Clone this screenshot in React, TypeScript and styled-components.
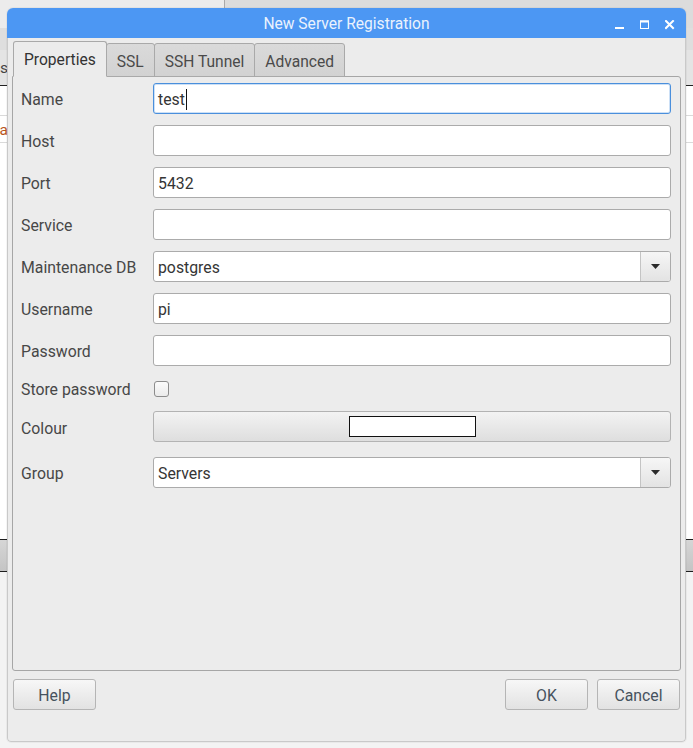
import React from "react";
import styled, { createGlobalStyle } from "styled-components";

const Global = createGlobalStyle`
  html, body { margin: 0; padding: 0; }
  body {
    width: 693px;
    height: 748px;
    overflow: hidden;
    font-family: Roboto, "Noto Sans", "Liberation Sans", sans-serif;
    -webkit-font-smoothing: antialiased;
  }
  * { box-sizing: border-box; }
`;

const Desktop = styled.div`
  position: relative;
  width: 693px;
  height: 748px;
  overflow: hidden;
  background: #ffffff;
`;

/* ---------- background application window ---------- */
const BgApp = styled.div`
  display: flex;
  flex-direction: column;
  width: 100%;
  height: 100%;
`;
const BgTop = styled.div`
  display: flex;
  height: 28px;
`;
const BgTopLeft = styled.div`
  width: 225px;
  background: #ececec;
  border-right: 1px solid #a9a9a9;
`;
const BgTopRight = styled.div`
  flex: 1;
  background: #dcdcdc;
`;
const BgToolbar = styled.div`
  height: 22px;
  background: #dedede;
`;
const BgTabs = styled.div`
  height: 36px;
  background: #e4e4e4;
  border-bottom: 1px solid #222;
  display: flex;
  align-items: center;
`;
const BgClip = styled.div<{ $color?: string }>`
  width: 8px;
  overflow: hidden;
  display: flex;
  justify-content: flex-end;
  white-space: nowrap;
  font-size: 15.5px;
  padding-top: 1px;
  color: ${(p) => p.$color || "#444"};
`;
const BgPanel = styled.div`
  height: 453px;
  background: #ffffff;
  display: flex;
  flex-direction: column;
  padding-top: 29px;
`;
const BgRow = styled.div`
  height: 28px;
  border-top: 1px solid #dadada;
  border-bottom: 1px solid #dadada;
  display: flex;
  align-items: center;
`;
const BgStatus = styled.div`
  height: 33px;
  border-top: 1px solid #1e1e1e;
  border-bottom: 1px solid #1e1e1e;
  background: linear-gradient(#d6d6d6, #c4c4c4);
`;
const BgRest = styled.div`
  flex: 1;
  background: #f3f3f3;
`;

/* ---------- dialog window ---------- */
const Dialog = styled.div`
  position: absolute;
  left: 7px;
  top: 8px;
  width: 679px;
  height: 734px;
  display: flex;
  flex-direction: column;
  border-radius: 6px 6px 4px 4px;
  overflow: hidden;
  box-shadow: 0 0 0 1px rgba(0, 0, 0, 0.04);
`;
const TitleBar = styled.div`
  height: 30px;
  background: #4c97f3;
  display: grid;
  grid-template-columns: 1fr auto 1fr;
  align-items: center;
  color: #eaf2fd;
  font-size: 15.6px;
`;
const TitleText = styled.div`
  grid-column: 2;
  padding-top: 1px;
`;
const Controls = styled.div`
  grid-column: 3;
  justify-self: end;
  display: flex;
  align-items: center;
  gap: 15px;
  padding-right: 11px;
  padding-top: 3px;
`;
const Body = styled.div`
  flex: 1;
  background: #ececec;
  border: 1px solid #c9c9c9;
  border-top: none;
  border-radius: 0 0 4px 4px;
  padding: 3px 4px 0 4px;
  display: flex;
  flex-direction: column;
`;
const TabStrip = styled.div`
  display: flex;
  align-items: flex-end;
  height: 36px;
  padding-left: 1px;
  margin-bottom: -1px;
`;
const Tab = styled.div<{ $active?: boolean }>`
  position: relative;
  z-index: ${(p) => (p.$active ? 2 : 1)};
  height: ${(p) => (p.$active ? 36 : 34)}px;
  padding: 0 10px;
  margin-right: -1px;
  display: flex;
  align-items: center;
  justify-content: center;
  font-size: 15.6px;
  color: ${(p) => (p.$active ? "#333" : "#4a4a4a")};
  border: 1px solid #a9a9a9;
  border-bottom-color: ${(p) => (p.$active ? "#ececec" : "#a9a9a9")};
  border-radius: 3px 3px 0 0;
  background: ${(p) =>
    p.$active ? "#ececec" : "linear-gradient(#dadada, #d2d2d2)"};
  padding-top: ${(p) => (p.$active ? 2 : 3)}px;
`;
const Panel = styled.div`
  height: 595px;
  border: 1px solid #a6a6a6;
  border-radius: 0 3px 3px 3px;
  background: #ececec;
  padding: 6px 9px 0 8px;
`;
const Form = styled.div`
  display: grid;
  grid-template-columns: 132px 1fr;
  grid-template-rows: repeat(7, 31px) 23px 35px 31px;
  row-gap: 11px;
  align-items: center;
`;
const Label = styled.div`
  font-size: 15.8px;
  color: #474747;
  white-space: nowrap;
  padding-top: 2px;
`;
const Input = styled.div<{ $focus?: boolean }>`
  height: 31px;
  background: #ffffff;
  border: 1px solid ${(p) => (p.$focus ? "#4a8fdc" : "#ababab")};
  border-radius: 3px;
  box-shadow: ${(p) =>
    p.$focus ? "inset 0 0 0 1px rgba(110,165,230,0.35)" : "none"};
  display: flex;
  align-items: center;
  padding: 1px 0 0 4px;
  font-size: 15.8px;
  color: #353535;
`;
const Caret = styled.span`
  display: inline-block;
  width: 1px;
  height: 21px;
  background: #111;
  margin-left: 1px;
`;
const Combo = styled.div`
  height: 31px;
  background: #ffffff;
  border: 1px solid #ababab;
  border-radius: 3px;
  display: flex;
  align-items: stretch;
  overflow: hidden;
  font-size: 15.8px;
  color: #353535;
`;
const ComboText = styled.div`
  flex: 1;
  display: flex;
  align-items: center;
  padding: 1px 0 0 4px;
`;
const ComboBtn = styled.div`
  width: 30px;
  border-left: 1px solid #c4c4c4;
  background: linear-gradient(#f6f6f6, #e3e3e3);
  display: flex;
  align-items: center;
  justify-content: center;
`;
const CheckRow = styled.div`
  display: flex;
  align-items: center;
  padding-left: 1px;
`;
const Check = styled.div`
  width: 15px;
  height: 16px;
  border: 1px solid #8c8c8c;
  border-radius: 3px;
  background: linear-gradient(#fbfbfb, #ebebeb);
`;
const ColourLabel = styled(Label)`
  align-self: start;
  line-height: 31px;
`;
const ColourBtn = styled.div`
  height: 31px;
  border: 1px solid #b3b3b3;
  border-radius: 3px;
  background: linear-gradient(#f3f3f3, #dedede);
  display: flex;
  align-items: center;
  justify-content: center;
  align-self: start;
`;
const Swatch = styled.div`
  width: 127px;
  height: 21px;
  background: #ffffff;
  border: 1px solid #111;
`;
const ButtonBar = styled.div`
  display: flex;
  align-items: center;
  padding: 8px 1px 0 1px;
  gap: 9px;
`;
const Spacer = styled.div`
  flex: 1;
`;
const PushButton = styled.div`
  width: 83px;
  height: 31px;
  border: 1px solid #b5b5b5;
  border-radius: 3px;
  background: linear-gradient(#f7f7f7, #e2e2e2);
  display: flex;
  align-items: center;
  justify-content: center;
  padding-top: 1px;
  font-size: 15.8px;
  color: #46525e;
`;

const MinIcon = () => (
  <svg width="10" height="10" viewBox="0 0 10 10">
    <rect x="0" y="7" width="9" height="2" fill="#fff" />
  </svg>
);
const MaxIcon = () => (
  <svg width="10" height="10" viewBox="0 0 10 10">
    <rect x="0.5" y="1" width="8" height="7.5" fill="none" stroke="#fff" strokeWidth="1" />
    <rect x="0" y="0.5" width="9" height="2" fill="#fff" />
  </svg>
);
const CloseIcon = () => (
  <svg width="10" height="10" viewBox="0 0 10 10">
    <path d="M1 1 L8 8 M8 1 L1 8" stroke="#fff" strokeWidth="2" strokeLinecap="square" />
  </svg>
);
const Arrow = () => (
  <svg width="9" height="5" viewBox="0 0 9 5">
    <path d="M0 0 H9 L4.5 5 Z" fill="#2b2b2b" />
  </svg>
);

export default function App() {
  return (
    <>
      <Global />
      <Desktop>
        <BgApp>
          <BgTop>
            <BgTopLeft />
            <BgTopRight />
          </BgTop>
          <BgToolbar />
          <BgTabs>
            <BgClip>Dashboards</BgClip>
          </BgTabs>
          <BgPanel>
            <BgRow>
              <BgClip $color="#b8561c">Data</BgClip>
            </BgRow>
          </BgPanel>
          <BgStatus />
          <BgRest />
        </BgApp>

        <Dialog>
          <TitleBar>
            <TitleText>New Server Registration</TitleText>
            <Controls>
              <MinIcon />
              <MaxIcon />
              <CloseIcon />
            </Controls>
          </TitleBar>
          <Body>
            <TabStrip>
              <Tab $active>Properties</Tab>
              <Tab>SSL</Tab>
              <Tab>SSH Tunnel</Tab>
              <Tab>Advanced</Tab>
            </TabStrip>
            <Panel>
              <Form>
                <Label>Name</Label>
                <Input $focus>
                  test
                  <Caret />
                </Input>
                <Label>Host</Label>
                <Input />
                <Label>Port</Label>
                <Input>5432</Input>
                <Label>Service</Label>
                <Input />
                <Label>Maintenance DB</Label>
                <Combo>
                  <ComboText>postgres</ComboText>
                  <ComboBtn>
                    <Arrow />
                  </ComboBtn>
                </Combo>
                <Label>Username</Label>
                <Input>pi</Input>
                <Label>Password</Label>
                <Input />
                <Label>Store password</Label>
                <CheckRow>
                  <Check />
                </CheckRow>
                <ColourLabel>Colour</ColourLabel>
                <ColourBtn>
                  <Swatch />
                </ColourBtn>
                <Label>Group</Label>
                <Combo>
                  <ComboText>Servers</ComboText>
                  <ComboBtn>
                    <Arrow />
                  </ComboBtn>
                </Combo>
              </Form>
            </Panel>
            <ButtonBar>
              <PushButton>Help</PushButton>
              <Spacer />
              <PushButton>OK</PushButton>
              <PushButton>Cancel</PushButton>
            </ButtonBar>
          </Body>
        </Dialog>
      </Desktop>
    </>
  );
}
